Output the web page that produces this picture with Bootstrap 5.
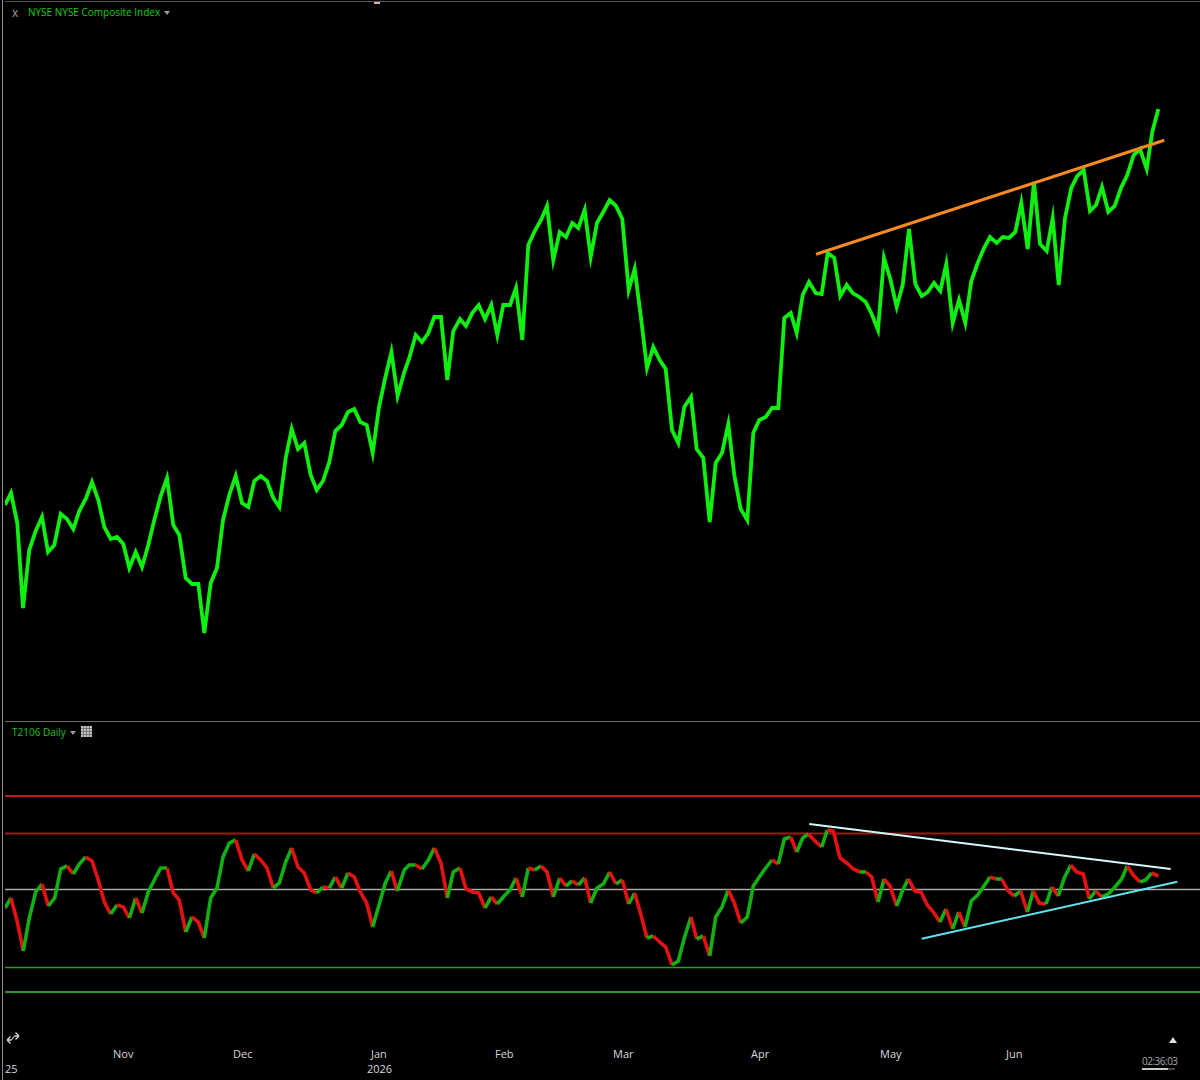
<!DOCTYPE html>
<html lang="en">
<head>
  <meta charset="UTF-8">
  <title>NYSE Composite Index</title>
  <link href="https://cdn.jsdelivr.net/npm/bootstrap@5.3.0/dist/css/bootstrap.min.css" rel="stylesheet">
  <style>
    html, body { height: 100%; background: #000; overflow: hidden; }
    body { font-family: "Open Sans", "Liberation Sans", sans-serif; font-size: 11px; color: #ccc; }
    .chart-window { height: 1080px; margin-left: 2px; padding: 1px 0 0 2px; border-left: 1px solid #8c8c8c; }
    .price-pane { height: 721px; border-top: 1px solid #555; border-bottom: 1px solid #6e6e6e; }
    .breadth-pane { height: 308px; }
    .chart { display: block; width: 100%; height: 100%; }
    .pane-title { top: 0; left: 0; font-size: 10px; line-height: 15px; }
    .price-pane .pane-title { padding: 3px 0 0 7px; }
    .breadth-pane .pane-title { padding: 3px 0 0 7px; }
    .close-x { color: #a0a0a0; width: 16px; font-size: 12px; }
    .title-price { color: #0fd00f; }
    .title-breadth { color: #1cc01c; }
    .caret { width: 0; height: 0; margin: 0 5px 0 4px; border: 3.5px solid transparent; border-top: 4px solid #9a9a9a; border-bottom: 0; }
    .grid-icon { width: 11px; height: 11px; margin: -2px 0 0 0; }
    .marker { top: 0; left: 369px; width: 6px; height: 2px; background: #e9a6a0; }
    .time-axis { height: 50px; color: #d8d8d8; line-height: 15px; }
    .axis-icons { height: 16px; }
    .axis-row { height: 15px; }
    .axis-row span { position: absolute; top: 0; }
    .clock { right: 25px; top: 25px; width: 33px; color: #a8a8a8; font-size: 10px; line-height: 13px; letter-spacing: -.05em; white-space: nowrap; }
    .clock-bar { height: 2px; background: #4a4a4a; }
    .clock-fill { height: 100%; background: #c8c8c8; }
    .up-arrow { width: 0; height: 0; margin-right: 23px; margin-top: 7px; border: 4px solid transparent; border-bottom: 6px solid #ddd; border-top: 0; }
    .swap-icon { margin: 1px 0 0 1px; }
  </style>
</head>
<body>
<div class="chart-window d-flex flex-column">

  <div class="price-pane position-relative">
    <div class="pane-title position-absolute d-flex align-items-center">
      <span class="close-x">x</span>
      <span class="title-price">NYSE NYSE Composite Index</span>
      <span class="caret"></span>
    </div>
    <span class="marker position-absolute"></span>
    <svg class="chart" id="priceChart" viewBox="5 2 1195 719" preserveAspectRatio="none"></svg>
  </div>

  <div class="breadth-pane position-relative">
    <div class="pane-title position-absolute d-flex align-items-center">
      <span class="title-breadth">T2106 Daily</span>
      <span class="caret"></span>
      <svg class="grid-icon" viewBox="0 0 11 11">
        <rect width="11" height="11" fill="#c4c4c4"/>
        <path d="M0 2.5H11M0 5.5H11M0 8.5H11M2.500 0V11M5.500 0V11M8.500 0V11" stroke="#777" stroke-width="1"/>
      </svg>
    </div>
    <svg class="chart" id="breadthChart" viewBox="5 722 1195 308" preserveAspectRatio="none"></svg>
  </div>

  <div class="time-axis position-relative">
    <div class="axis-icons d-flex justify-content-between align-items-start">
      <svg class="swap-icon" width="14" height="14" viewBox="0 0 14 14">
        <path d="M1 9H5.500M1 9 4.500 5.500M1 9 4.500 12.500" stroke="#d4d4d4" stroke-width="1.3" fill="none"/>
        <path d="M13 5H8.500M13 5 9.500 1.500M13 5 9.500 8.500" stroke="#d4d4d4" stroke-width="1.3" fill="none"/>
        <path d="M5.500 9 8.500 5" stroke="#d4d4d4" stroke-width="1.100" fill="none"/>
      </svg>
      <span class="up-arrow"></span>
    </div>
    <div class="axis-row position-relative" id="monthRow"></div>
    <div class="axis-row position-relative" id="yearRow"></div>
    <div class="clock position-absolute">
      02:36:03
      <div class="clock-bar"><div class="clock-fill" style="width: 80%"></div></div>
    </div>
  </div>

</div>

<script src="https://cdn.jsdelivr.net/npm/bootstrap@5.3.0/dist/js/bootstrap.bundle.min.js"></script>
<script>
  // all chart data is in page coordinates, the svg viewBoxes map them back
  const price = `5,505 11,493 17.3,523 23,608 29.3,550 35.7,531 42,517 48,552 54.3,545 60.7,514 67,519 73.3,529 79.3,511 85.7,499 92,482 98.3,500 104.3,527 110.7,539 117,537 123.3,544 129.3,568 135.7,552 142,567 148.3,545 154.3,520 160.7,496 167,478 173.3,525 179.3,535 185.7,578 192,584 198.3,584 204.3,633 210.7,583 217,568 223,520 229.3,495 235.7,476 242,503 248.3,507 254.3,481 260.7,476 267,481 273.3,498 279.3,507 285.7,458 291.7,429 298,449 304.3,443 310.7,475 316.7,490 323,481 329.3,462 335.3,431 341.7,425 348,412 354.3,409 360.3,422 366.7,425 372.7,453 379,407 385.2,378 391.4,352 397.6,396 404.3,372 409.3,358 415.7,335 422,342 428.3,333 434.3,317 441,317 447.3,380 453.3,331 460,319 466,326 472.3,313 478.7,305 485,319 491.3,305 497.3,335 503.3,305 510,305 516,288 522.3,340 528.3,245 534.7,231 541,220 547,206 553.3,260 559.7,232 566,237 572.3,223 578.3,228 584.7,210 590.7,257 597,223 603.3,212 609.7,200 616,206 622.3,219 628.7,290 634.7,269 641,318 647,368 653.3,347 659.7,360 665.7,369 672,430 678.3,443 684.3,407 691,397 696.7,449 703.3,458 709.7,522 715.7,463 722,453 728.3,424 734.3,475 740.7,509 747.3,520 753.3,433 759.3,420 765.7,417 772,408 778.3,408 784.3,318 790.7,313 796.7,333 802.7,295 809,282 815.7,293 821.7,294 827.7,253 834.3,258 840.3,296 846.7,285 852.7,293 859.3,297 865.7,302 871.7,314 878,330 884,258 890.3,279 896.7,307 902.7,285 909,229 915.3,284 921.7,296 927.7,292 934,283 940.3,291 946.3,264 952.7,323 959,300 965.3,323 971.3,281 977.7,263 984,248 990,237 996.7,243 1002.7,237 1009,238 1015.3,232 1021.3,203 1027.7,249 1034,182 1040,244 1046.7,251 1052.7,218 1058.7,285 1065,218 1071.3,188 1077.3,176 1083.7,170 1090,211 1096,205 1102,187 1108.3,212 1114.7,206 1121,188 1127.3,175 1133.7,155 1140,149 1146.7,169 1152.3,132 1158.3,109`;

  const breadth = `5,908 11,898 17.3,922 23.3,951 29.3,918 35.7,892 42,884 48.3,906 54.7,898 60.7,869 67,866 73.3,874 79.3,864 85.7,857 92,861 98.3,880 104.3,902 110.7,914 117,905 123.3,907 129.3,918 135.7,898 142,913 148.3,892 154.3,880 160.7,868 167,868 173.3,893 179.3,900 185.7,932 192,917 198.3,922 204.3,938 210.7,898 217,888 223,857 229.3,843 235.7,840 242,860 248.3,871 254.3,854 260.7,860 267,868 273.3,888 279.3,883 285.7,862 291.7,848 298,867 304.3,873 310.7,890 316.7,893 323,887 329.3,888 335.3,877 341.7,888 348,873 354.3,877 360.3,892 366.7,903 372.7,927 379,905 385.3,883 391.3,871 397.3,891 404.3,870 409.3,865 415.7,865 422,869 428.3,860 434.3,848 441,863 447.3,898 453.3,872 460,868 466,889 472.3,892 478.7,893 485,908 491.3,897 497.3,904 503.3,897 510,890 516,878 522.3,897 528.3,868 534.7,870 541,866 547,872 553.3,897 559.7,878 566,886 572.3,881 578.3,885 584.7,878 590.7,903 597,888 603.3,884 609.7,872 616,884 622.3,880 628.7,904 634.7,893 641,915 647,938 653.3,936 659.7,942 665.7,947 672,965 678.3,961 684.3,938 691,917 696.7,939 703.3,936 709.7,956 715.7,917 722,907 728.3,890 734.3,903 740.7,923 747.3,917 753.3,886 759.3,877 765.7,868 772,860 778.3,864 784.3,839 790.7,837 796.7,852 802.7,838 808.3,834 815,841 821.7,847 827.3,830 833.3,831 840,858 846.7,863 853.3,869 860,872 866,872 871.7,877 878,902 884,879 890,886 896.7,906 902.7,890 908.3,879 915,891 921,892 927.3,905 933.3,912 940,922 946,909 952.7,929 958.7,912 965,927 971.3,901 977.7,895 984,886 990,877 996,879 1001.7,879 1008.3,891 1014.3,896 1020.7,891 1027.3,912 1033.3,891 1039.3,903 1046,904 1052,887 1058.3,896 1064.3,878 1070.7,865 1076.7,872 1083.3,874 1089.3,899 1095.7,891 1101.7,897 1108.3,894 1115,887 1121.7,879 1127.3,866 1133.3,875 1140,882 1145.7,880 1151.7,873 1158.3,876`;

  const line = (x1, y1, x2, y2, color, width) =>
    `<line x1="${x1}" y1="${y1}" x2="${x2}" y2="${y2}" stroke="${color}" stroke-width="${width}"/>`;
  const poly = (pts, color, width) =>
    `<polyline points="${pts}" fill="none" stroke="${color}" stroke-width="${width}" stroke-linejoin="miter" stroke-miterlimit="8"/>`;

  document.getElementById('priceChart').innerHTML =
    poly(price, '#10f010', 3.8) +
    line(816, 254.3, 1164.3, 140.3, '#f58a1f', 3);

  // the breadth line is green while rising and red while falling
  const pts = breadth.split(' ').map(p => p.split(',').map(Number));
  const colorOf = i => pts[i + 1][1] > pts[i][1] ? '#e41212' : '#12b012';
  let runs = [];
  for (let i = 0; i < pts.length - 1; i++) {
    const color = colorOf(i);
    const last = runs[runs.length - 1];
    if (last && last.color === color) last.pts.push(pts[i + 1].join(','));
    else runs.push({ color, pts: [pts[i].join(','), pts[i + 1].join(',')] });
  }

  const levels = [[796, '#c01818', 2], [833.5, '#a31616', 2], [889.5, '#a8a8a8', 1.6], [967.5, '#2a9a2a', 1.6], [992, '#2a9a2a', 2]];
  document.getElementById('breadthChart').innerHTML =
    levels.map(([y, c, w]) => line(5, y, 1200, y, c, w)).join('') +
    runs.map(r => poly(r.pts.join(' '), r.color, 3.6)).join('') +
    line(809.3, 824, 1170.7, 869, '#d2f8fc', 2) +
    line(921.7, 938.7, 1177.3, 881.7, '#5fe3ee', 2);

  const offset = 5;
  const months = [['Nov', 113], ['Dec', 233], ['Jan', 371], ['Feb', 495], ['Mar', 613], ['Apr', 751], ['May', 880], ['Jun', 1006]];
  const years = [['25', 5], ['2026', 367]];
  const place = (id, items) => {
    document.getElementById(id).innerHTML = items
      .map(([t, x]) => `<span style="left: ${x - offset}px">${t}</span>`).join('');
  };
  place('monthRow', months);
  place('yearRow', years);
</script>
</body>
</html>
